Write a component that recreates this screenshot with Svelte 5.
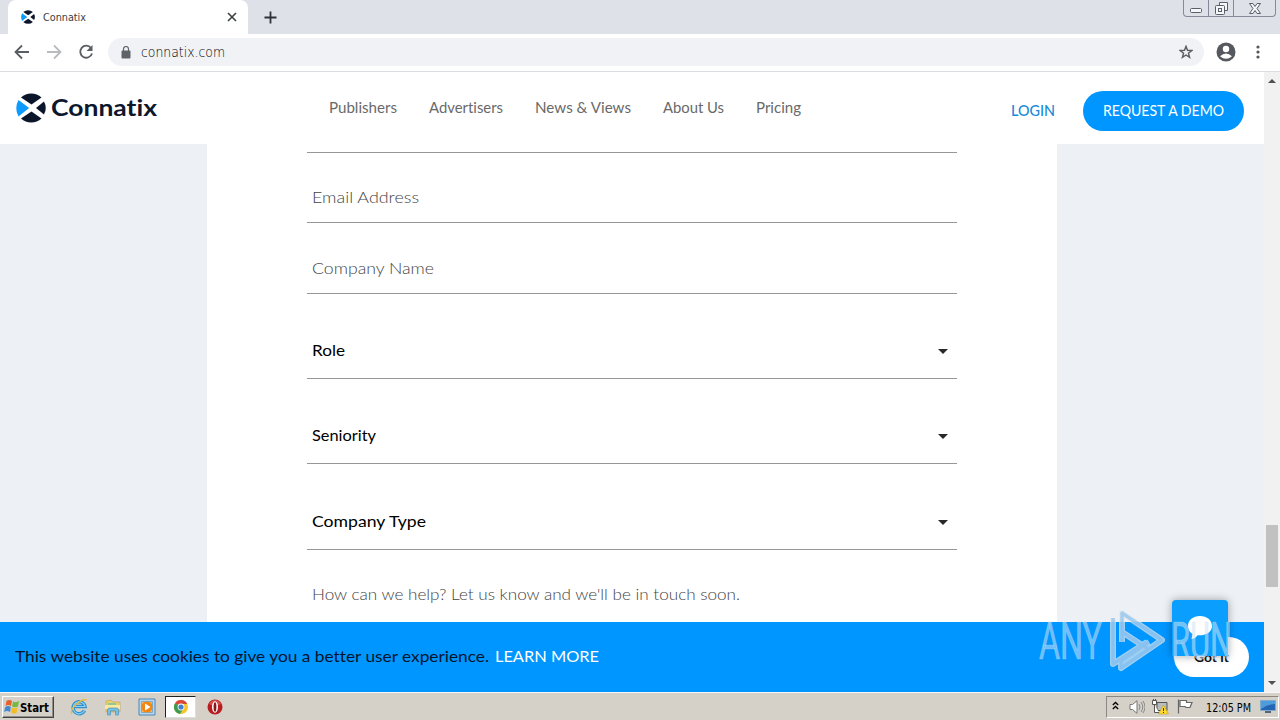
<script>
    const links = [
        { label: 'Publishers', width: 68 },
        { label: 'Advertisers', width: 74 },
        { label: 'News & Views', width: 96 },
        { label: 'About Us', width: 61 },
        { label: 'Pricing', width: 45 }
    ];

    const fields = [
        { label: 'Email Address', type: 'input', height: 70, width: 107 },
        { label: 'Company Name', type: 'input', height: 71, width: 122 },
        { label: 'Role', type: 'select', height: 85, width: 33 },
        { label: 'Seniority', type: 'select', height: 85, width: 64 },
        { label: 'Company Type', type: 'select', height: 86, width: 114 }
    ];
</script>

<!-- text fitted to a given width -->
{#snippet fit(label, width, size)}
    <svg class="fit" {width} height="24" style="font-size: {size}px">
        <text x="0" y="17" textLength={width} lengthAdjust="spacingAndGlyphs">{label}</text>
    </svg>
{/snippet}

{#snippet mark(size)}
    <svg width={size} height={size} viewBox="0 0 30 30">
        <path d="M5 4.500A15 15 0 0 1 25.500 4.500L15.500 11.500Z" fill="#0b162b" />
        <path d="M5 25.500A15 15 0 0 0 25.500 25.500L15.500 18.500Z" fill="#0b162b" />
        <path d="M2.500 7Q-2 15 2.500 23.500L12.500 15.500Q13 15 12.500 14.500Z" fill="#0d9bff" />
        <path d="M28 8.500Q31.500 15 28 21.500L20 15Z" fill="#0b162b" />
    </svg>
{/snippet}

<div class="screen">
    <div class="tabs">
        <div class="tab">
            {@render mark(14)}
            <span class="tab-title">{@render fit('Connatix', 43, 11)}</span>
            <svg class="tab-close" width="10" height="10" viewBox="0 0 10 10"><path d="M1 1l8 8M9 1L1 9" /></svg>
        </div>
        <svg class="new-tab" width="13" height="13" viewBox="0 0 13 13"><path d="M6.500 0.500v12M0.500 6.500h12" /></svg>
        <div class="window-buttons">
            <span><svg width="12" height="5"><rect x=".5" y=".5" width="11" height="4" rx="1" /></svg></span>
            <span><svg width="13" height="13"><path d="M4.500 3.500v-3h8v8h-3" /><rect x=".5" y="3.500" width="9" height="9" rx="1" /><rect x="3.500" y="6.500" width="3" height="3" /></svg></span>
            <span class="wide"><svg width="12" height="11"><path d="M.5.5h3.500l2 3 2-3h3.500l-3.500 5 3.500 5H8l-2-3-2 3H.5l3.500-5z" /></svg></span>
        </div>
    </div>

    <div class="toolbar">
        <svg class="nav-icon" width="16" height="16" viewBox="0 0 16 16"><path d="M15 8H2M8 1.500L1.500 8 8 14.500" /></svg>
        <svg class="nav-icon off" width="16" height="16" viewBox="0 0 16 16"><path d="M1 8h13M8 1.500L14.500 8 8 14.500" /></svg>
        <svg class="nav-icon" width="16" height="16" viewBox="0 0 16 16"><path d="M13 4A6 6 0 1 0 14 9.500" /><path class="solid" d="M14.500 1v6H8.500z" /></svg>
        <div class="address">
            <svg width="10" height="13" viewBox="0 0 10 13"><rect x=".5" y="4.500" width="9" height="8" rx="1" fill="#5f6368" /><path d="M2.500 5V3a2.500 2.500 0 0 1 5 0v2" fill="none" stroke="#5f6368" stroke-width="1.200" /></svg>
            <span class="url">{@render fit('connatix.com', 84, 14)}</span>
            <svg class="star" width="14" height="14" viewBox="0 0 16 16"><path d="M8 1.500l1.700 4.600 4.900.2-3.800 3.100 1.300 4.700L8 11.400l-4.100 2.700 1.300-4.700-3.800-3.100 4.900-.2z" /></svg>
        </div>
        <svg class="avatar" width="20" height="20" viewBox="0 0 20 20"><circle cx="10" cy="10" r="9.500" fill="#55585d" /><circle cx="10" cy="7" r="3.200" fill="#fff" /><path d="M4 14.200Q10 9 16 14.200Q10 19.500 4 14.200" fill="#fff" /></svg>
        <svg class="dots" width="4" height="14"><circle cx="2" cy="2" r="1.600" /><circle cx="2" cy="7" r="1.600" /><circle cx="2" cy="12" r="1.600" /></svg>
    </div>

    <div class="viewport">
        <main>
            <header>
                <div class="logo">
                    {@render mark(30)}
                    <svg class="wordmark" width="108" height="30"><text x="0" y="23" textLength="106" lengthAdjust="spacingAndGlyphs">Connatix</text></svg>
                </div>
                <nav>
                    {#each links as link}
                        <span>{@render fit(link.label, link.width, 14.5)}</span>
                    {/each}
                </nav>
                <span class="login">{@render fit('LOGIN', 44, 14.5)}</span>
                <span class="demo">{@render fit('REQUEST A DEMO', 121, 14.5)}</span>
            </header>

            <div class="backdrop">
                <form>
                    <div class="field first"></div>
                    {#each fields as field}
                        <div class="field {field.type}" style="height: {field.height}px">
                            {@render fit(field.label, field.width, 16)}
                            {#if field.type === 'select'}
                                <svg class="caret" width="10" height="5"><path d="M0 0h10L5 5z" /></svg>
                            {/if}
                        </div>
                    {/each}
                    <div class="message">{@render fit("How can we help? Let us know and we'll be in touch soon.", 428, 16)}</div>
                </form>
            </div>

            <div class="cookies">
                {@render fit('This website uses cookies to give you a better user experience.', 474, 16)}
                <span class="learn">{@render fit('LEARN MORE', 104, 16)}</span>
                <span class="got-it">{@render fit('Got it', 35, 14)}</span>
            </div>

            <div class="chat">
                <svg width="26" height="26" viewBox="0 0 26 26"><path d="M13 1C6 1 1 5.300 1 11c0 3.500 1.800 6.300 4.500 8l-1 5c3-.5 4.800-1.900 6-3.800C19 21 25 17 25 11 25 5.300 20 1 13 1z" fill="#fff" /></svg>
            </div>
        </main>

        <div class="scrollbar">
            <svg width="8" height="4"><path d="M0 4h8L4 0z" /></svg>
            <div class="thumb"></div>
            <svg width="8" height="4"><path d="M0 0h8L4 4z" /></svg>
        </div>
    </div>

    <div class="taskbar">
        <div class="start">
            <svg width="16" height="15" viewBox="0 0 16 15">
                <path d="M2.500 2Q5 0 8 2L7 7Q4 5 1.500 7z" fill="#e8602c" />
                <path d="M9 2.500Q12 4 15 2L14 7.500Q11 9 8 7.500z" fill="#75b943" />
                <path d="M1.300 8Q4 6 6.800 8L6 13Q3 11 0 13z" fill="#428bd2" />
                <path d="M7.800 8.500Q11 10 13.800 8.500L12.500 14Q10 15.500 7 13.500z" fill="#f4bd28" />
            </svg>
            {@render fit('Start', 29, 12)}
        </div>
        <div class="task">
            <svg width="18" height="18" viewBox="0 0 18 18"><path d="M14.500 12.500A6 6 0 1 1 15 8.500H4" fill="none" stroke="#3491cd" stroke-width="3.400" /><path d="M14.500 12.500A6 6 0 1 1 15 8.500H4" fill="none" stroke="#8bd3f8" stroke-width="1.200" /><path d="M2 16C-1 12 10 0 17 2" fill="none" stroke="#e4bd45" stroke-width="1.300" /></svg>
        </div>
        <div class="task">
            <svg width="18" height="18" viewBox="0 0 18 18"><path d="M2 3l5-1 2 2h7v10H2z" fill="#e9ce70" stroke="#b69b48" stroke-width=".5" /><path d="M4 5h8v3H4z" fill="#93c991" /><path d="M1 7h15v4H1z" fill="#f8e9a3" /><path d="M3.500 17v-5q0-2 2-2h7q2 0 2 2v5h-3v-4h-5v4z" fill="#78bfe4" stroke="#4189b7" stroke-width=".6" /></svg>
        </div>
        <div class="task">
            <svg width="18" height="18" viewBox="0 0 18 18"><path d="M1 1h16v16H1z" fill="#b7d7ed" stroke="#4e87b6" /><path d="M3.500 3.500h11v11h-11z" fill="#f2b768" stroke="#7eabc9" /><circle cx="9" cy="9" r="5.500" fill="#f18612" /><path d="M7 5.500v7L12.500 9z" fill="#fff" /></svg>
        </div>
        <div class="task active">
            <svg width="14" height="14" viewBox="0 0 14 14"><circle cx="7" cy="7" r="7" fill="#f4c52c" /><path d="M7 7L1 3.300A7 7 0 0 1 13.200 4H7z" fill="#d9483b" /><path d="M1 3.300A7 7 0 0 0 6 14L9.500 8.500 7 7z" fill="#3d9c52" /><circle cx="7" cy="7" r="3.400" fill="#fff" /><circle cx="7" cy="7" r="2.600" fill="#427fd0" /></svg>
        </div>
        <div class="task">
            <svg width="16" height="16" viewBox="0 0 16 16"><circle cx="8" cy="8" r="7.500" fill="#b71c20" /><path d="M2 5Q8-3 14 5Q8 8 2 5" fill="#d84d4d" /><ellipse cx="8" cy="8" rx="3" ry="5.700" fill="#fff" /><ellipse cx="8" cy="8" rx="1.400" ry="4.800" fill="#85191b" /></svg>
        </div>

        <div class="tray">
            <svg class="chevrons" width="7" height="9"><path d="M.8 4l2.700-2.500L6.200 4M.8 8l2.700-2.500L6.200 8" /></svg>
            <svg class="speaker" width="16" height="14" viewBox="0 0 16 14"><path d="M1 4.500h2.500L8 .7v12.600L3.500 9.500H1z" fill="#fff" stroke="#777" /><path d="M10 4q2 3 0 6M12 2q3.500 5 0 10M14 1q4 6 0 12" fill="none" stroke="#777" stroke-width=".8" /></svg>
            <svg class="network" width="17" height="16" viewBox="0 0 17 16"><path d="M5 3.500h10v8H5z" fill="#b9bdbd" stroke="#555" /><path d="M7 14.500h7M2.500 6v7.500H7M.5 1.500h4v4h-4zM1.500 0v2M3.500 0v2" fill="#fff" stroke="#555" /><path d="M11.500 6l5 9h-10z" fill="#ffdc2c" stroke="#b39517" stroke-width=".5" /><path d="M11.500 9v3M11.500 13v1" stroke="#333" /></svg>
            <svg class="flag" width="17" height="15" viewBox="0 0 17 15"><path d="M1.500.5v14M3 1.500h6.500v2H15l-2 5H9l-1-1H3z" fill="#fff" stroke="#666" stroke-width="1.200" /></svg>
            <span class="clock">{@render fit('12:05 PM', 45, 11.5)}</span>
            <svg class="desktop" width="16" height="14" viewBox="0 0 16 14"><path d="M.5.5h15v10H.5z" fill="#2465b4" stroke="#82aacd" /><path d="M1 1h14v3Q8 4 1 9z" fill="#4f9cdd" /><path d="M5 12h6" stroke="#567" stroke-width="2" /></svg>
        </div>
    </div>

    <svg class="watermark" width="194" height="64" viewBox="0 0 194 64">
        <g class="watermark-text">
            <text x="0" y="51" textLength="63" lengthAdjust="spacingAndGlyphs">ANY</text>
            <text x="132" y="51" textLength="61" lengthAdjust="spacingAndGlyphs">RUN</text>
        </g>
        <path class="play-edge" d="M83 24V5l40 27-41 28v-7l28-19M83 24l26 17M83 24v10M74 10v46l34-22" />
        <path class="play" d="M83 24V5l40 27-41 28v-7l28-19M83 24l26 17M83 24v10M74 10v46l34-22" />
    </svg>
</div>

<style>
    :global(body) {
        margin: 0;
        overflow: hidden;
    }

    .screen {
        position: relative;
        width: 1280px;
        height: 720px;
        display: flex;
        flex-direction: column;
        font-family: Lato, sans-serif;
        font-variant-ligatures: none;
    }

    svg {
        display: block;
        flex: none;
    }

    .fit {
        overflow: visible;
        fill: currentColor;
    }

    .tabs {
        height: 34px;
        display: flex;
        align-items: center;
        background: #dee1e8;
    }

    .tab {
        box-sizing: border-box;
        width: 240px;
        height: 34px;
        margin-left: 8px;
        padding: 0 11px 0 13px;
        display: flex;
        align-items: center;
        background: #fff;
        border-radius: 8px 8px 0 0;
    }

    .tab-title {
        margin: -2px 0 0 8px;
        color: #3c4043;
        font-family: 'DejaVu Sans Condensed', 'DejaVu Sans', sans-serif;
    }

    .tab-close {
        margin-left: auto;
        stroke: #3c4043;
        stroke-width: 1.6;
    }

    .new-tab {
        margin-left: 16px;
        stroke: #303238;
        stroke-width: 1.8;
    }

    .window-buttons {
        box-sizing: border-box;
        align-self: flex-start;
        height: 17px;
        margin: 0 4px 0 auto;
        display: flex;
        border: 1px solid #858a96;
        border-top: 0;
        border-radius: 0 0 4px 4px;
        fill: #f5f6f8;
        stroke: #5a5f6b;
    }

    .window-buttons span {
        width: 24px;
        display: flex;
        align-items: center;
        justify-content: center;
    }

    .window-buttons span + span {
        border-left: 1px solid #858a96;
    }

    .window-buttons span:first-child {
        padding-top: 4px;
        height: 12px;
    }

    .window-buttons .wide {
        width: 41px;
    }

    .toolbar {
        box-sizing: border-box;
        height: 38px;
        padding: 0 20px 1px 14px;
        display: flex;
        align-items: center;
        background: #fff;
        border-bottom: 1px solid #dadce0;
    }

    .nav-icon {
        margin-right: 16px;
        fill: none;
        stroke: #5a5d61;
        stroke-width: 1.8;
    }

    .nav-icon.off {
        stroke: #b9bbbd;
    }

    .nav-icon .solid {
        fill: #5a5d61;
        stroke: none;
    }

    .address {
        box-sizing: border-box;
        width: 1096px;
        height: 28px;
        margin-left: -2px;
        padding: 0 11px 0 13px;
        display: flex;
        align-items: center;
        background: #f0f2f5;
        border-radius: 14px;
    }

    .url {
        margin-left: 10px;
        color: #000;
        font-family: 'DejaVu Sans', sans-serif;
        font-weight: 300;
    }

    .star {
        margin-left: auto;
        fill: none;
        stroke: #5a5d61;
        stroke-width: 1.6;
    }

    .avatar {
        margin-left: 12px;
    }

    .dots {
        margin-left: auto;
        fill: #55585d;
    }

    .viewport {
        height: 620px;
        display: flex;
    }

    main {
        position: relative;
        width: 1264px;
        display: flex;
        flex-direction: column;
    }

    header {
        box-sizing: border-box;
        height: 72px;
        padding: 0 20px 0 16px;
        display: flex;
        align-items: center;
        background: #fff;
    }

    .logo {
        width: 313px;
        display: flex;
        align-items: center;
    }

    .wordmark {
        margin-left: 5px;
        overflow: visible;
        fill: #0e182d;
        font-size: 23.5px;
        font-weight: 700;
    }

    nav {
        display: flex;
        gap: 32px;
        color: #696969;
    }

    .login {
        margin: 6px 28px 0 auto;
        color: #168bd9;
        font-weight: 500;
    }

    .demo {
        height: 32px;
        margin-top: 6px;
        padding: 8px 20px 0;
        color: #fff;
        background: #0096ff;
        border-radius: 20px;
    }

    .backdrop {
        height: 478px;
        display: flex;
        background: #edf1f6;
    }

    form {
        width: 650px;
        margin-left: 207px;
        padding: 0 100px;
        background: #fff;
    }

    .field {
        box-sizing: border-box;
        padding: 0 9px 12px 5px;
        display: flex;
        align-items: flex-end;
        border-bottom: 1px solid #979797;
        color: #444;
        font-weight: 300;
    }

    .field.first {
        height: 9px;
        padding: 0;
    }

    .field.select {
        padding-bottom: 15px;
        color: #000;
        font-weight: 400;
    }

    .caret {
        margin: 0 0 9px auto;
        fill: #292929;
    }

    .message {
        padding: 33px 5px 0;
        color: #444;
        font-weight: 300;
    }

    .cookies {
        box-sizing: border-box;
        height: 70px;
        padding: 0 15px;
        display: flex;
        align-items: center;
        background: #0096ff;
        color: #03142c;
    }

    .learn {
        margin-left: 6px;
        color: #fff;
    }

    .got-it {
        height: 32px;
        margin-left: auto;
        padding: 8px 20px 0;
        background: #fff;
        border-radius: 20px;
        color: #111;
        font-weight: 700;
    }

    .chat {
        position: absolute;
        top: 528px;
        left: 1172px;
        width: 56px;
        height: 56px;
        display: flex;
        align-items: center;
        justify-content: center;
        background: #0a9fff;
        border-radius: 4px 4px 0 0;
        box-shadow: 0 0 8px rgba(0, 0, 0, .35);
    }

    .scrollbar {
        box-sizing: border-box;
        width: 16px;
        padding: 7px 0;
        display: flex;
        flex-direction: column;
        align-items: center;
        background: #f1f1f1;
        fill: #505050;
    }

    .thumb {
        width: 12px;
        height: 62px;
        margin: 442px 0 auto;
        background: #c1c1c1;
    }

    .taskbar {
        box-sizing: border-box;
        height: 28px;
        padding: 0 0 0 2px;
        display: flex;
        align-items: center;
        background: #d5d0c8;
        border-top: 1px solid #f8f7f4;
        font-family: 'DejaVu Sans Condensed', 'DejaVu Sans', sans-serif;
    }

    .start {
        box-sizing: border-box;
        width: 52px;
        height: 22px;
        padding-left: 1px;
        display: flex;
        align-items: center;
        border: 1px solid;
        border-color: #fff #444 #444 #fff;
        box-shadow: inset -1px -1px #918d87;
        font-weight: 700;
    }

    .task {
        box-sizing: border-box;
        width: 31px;
        height: 22px;
        margin-left: 3px;
        display: flex;
        align-items: center;
        justify-content: center;
    }

    .start + .task {
        margin-left: 9px;
    }

    .task.active {
        background: #fff;
        border: 1px solid;
        border-color: #222 #ddd #ddd #222;
    }

    .tray {
        box-sizing: border-box;
        width: 173px;
        height: 22px;
        margin: 0 1px 0 auto;
        padding: 0 2px 0 5px;
        display: flex;
        align-items: center;
        border: 1px solid;
        border-color: #8c8881 #fff #fff #8c8881;
    }

    .chevrons {
        margin-top: -3px;
        fill: none;
        stroke: #000;
        stroke-width: 1.3;
    }

    .speaker {
        margin-left: 10px;
    }

    .network {
        margin-left: 7px;
    }

    .flag {
        margin-left: 8px;
    }

    .clock {
        margin-left: 12px;
    }

    .desktop {
        margin-left: auto;
    }

    .watermark {
        position: absolute;
        top: 608px;
        left: 1039px;
        overflow: visible;
    }

    .watermark-text {
        font-family: Roboto, sans-serif;
        font-size: 51px;
        font-weight: 400;
        fill: rgba(205, 228, 248, .55);
        stroke: rgba(205, 220, 235, .5);
        stroke-width: .7;
    }

    .play-edge,
    .play {
        fill: none;
        stroke: rgba(225, 232, 240, .7);
        stroke-width: 6;
        stroke-linejoin: round;
    }

    .play {
        stroke: rgba(125, 185, 235, .6);
        stroke-width: 3.5;
    }
</style>
